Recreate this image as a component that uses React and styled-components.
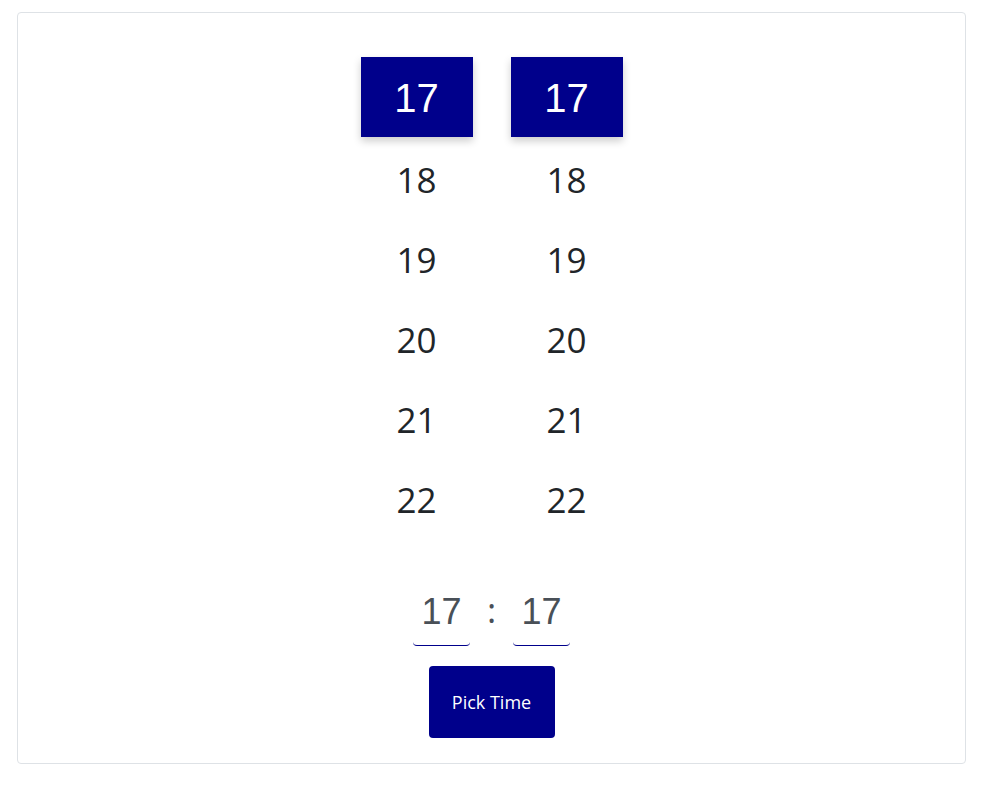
import styled, { createGlobalStyle } from 'styled-components'
import { useState } from 'react'

const GlobalStyle = createGlobalStyle`
    body {
        margin: 0;
        background: #fff;
        font-family: "Open Sans", "Noto Sans", sans-serif;
    }
`

const Page = styled.div`
    padding: 12px 22px 27px 17px;
`

const Card = styled.div`
    border: 1px solid #dee2e6;
    border-radius: 4px;
    padding: 44px 0 25px;
    display: flex;
    flex-direction: column;
    align-items: center;
`

const Wheels = styled.div`
    display: flex;
    gap: 38px;
`

const Wheel = styled.div`
    display: flex;
    flex-direction: column;
`

const Item = styled.div`
    width: 112px;
    height: 80px;
    box-sizing: border-box;
    padding-top: ${p => p.$active ? '3px' : '4px'};
    display: flex;
    align-items: center;
    justify-content: center;
    font-family: ${p => p.$active ? '"Liberation Sans", Arial, sans-serif' : '"Open Sans", sans-serif'};
    font-size: ${p => p.$active ? '40px' : '35px'};
    color: ${p => p.$active ? '#fff' : '#212529'};
    background: ${p => p.$active ? '#00008b' : 'transparent'};
    box-shadow: ${p => p.$active ? '0 4px 8px rgba(0, 0, 0, 0.2)' : 'none'};
    cursor: pointer;
`

const Display = styled.div`
    margin-top: 54px;
    display: flex;
    align-items: flex-start;
`

const Field = styled.input`
    width: 57px;
    height: 55px;
    box-sizing: border-box;
    padding: 0 0 13px;
    border: none;
    border-bottom: 1px solid #00008b;
    border-radius: 4px;
    background: transparent;
    font-family: "Liberation Sans", Arial, sans-serif;
    font-size: 36px;
    color: #495057;
    text-align: center;
    outline: none;
`

const Colon = styled.span`
    width: 43px;
    height: 41px;
    line-height: 38px;
    text-align: center;
    font-size: 35px;
    color: #495057;
`

const Button = styled.button`
    margin-top: 20px;
    width: 126px;
    height: 72px;
    border: none;
    border-radius: 4px;
    background: #00008b;
    color: #fff;
    font-family: "Open Sans", sans-serif;
    font-size: 18px;
    cursor: pointer;
`

const values = [17, 18, 19, 20, 21, 22]

function App() {
    const [hour, setHour] = useState(17)
    const [minute, setMinute] = useState(17)

    return (
        <Page>
            <GlobalStyle />
            <Card>
                <Wheels>
                    <Wheel>
                        {values.map(v => (
                            <Item key={v} $active={v === hour} onClick={() => setHour(v)}>{v}</Item>
                        ))}
                    </Wheel>
                    <Wheel>
                        {values.map(v => (
                            <Item key={v} $active={v === minute} onClick={() => setMinute(v)}>{v}</Item>
                        ))}
                    </Wheel>
                </Wheels>
                <Display>
                    <Field value={hour} readOnly />
                    <Colon>:</Colon>
                    <Field value={minute} readOnly />
                </Display>
                <Button>Pick Time</Button>
            </Card>
        </Page>
    )
}

export default App
